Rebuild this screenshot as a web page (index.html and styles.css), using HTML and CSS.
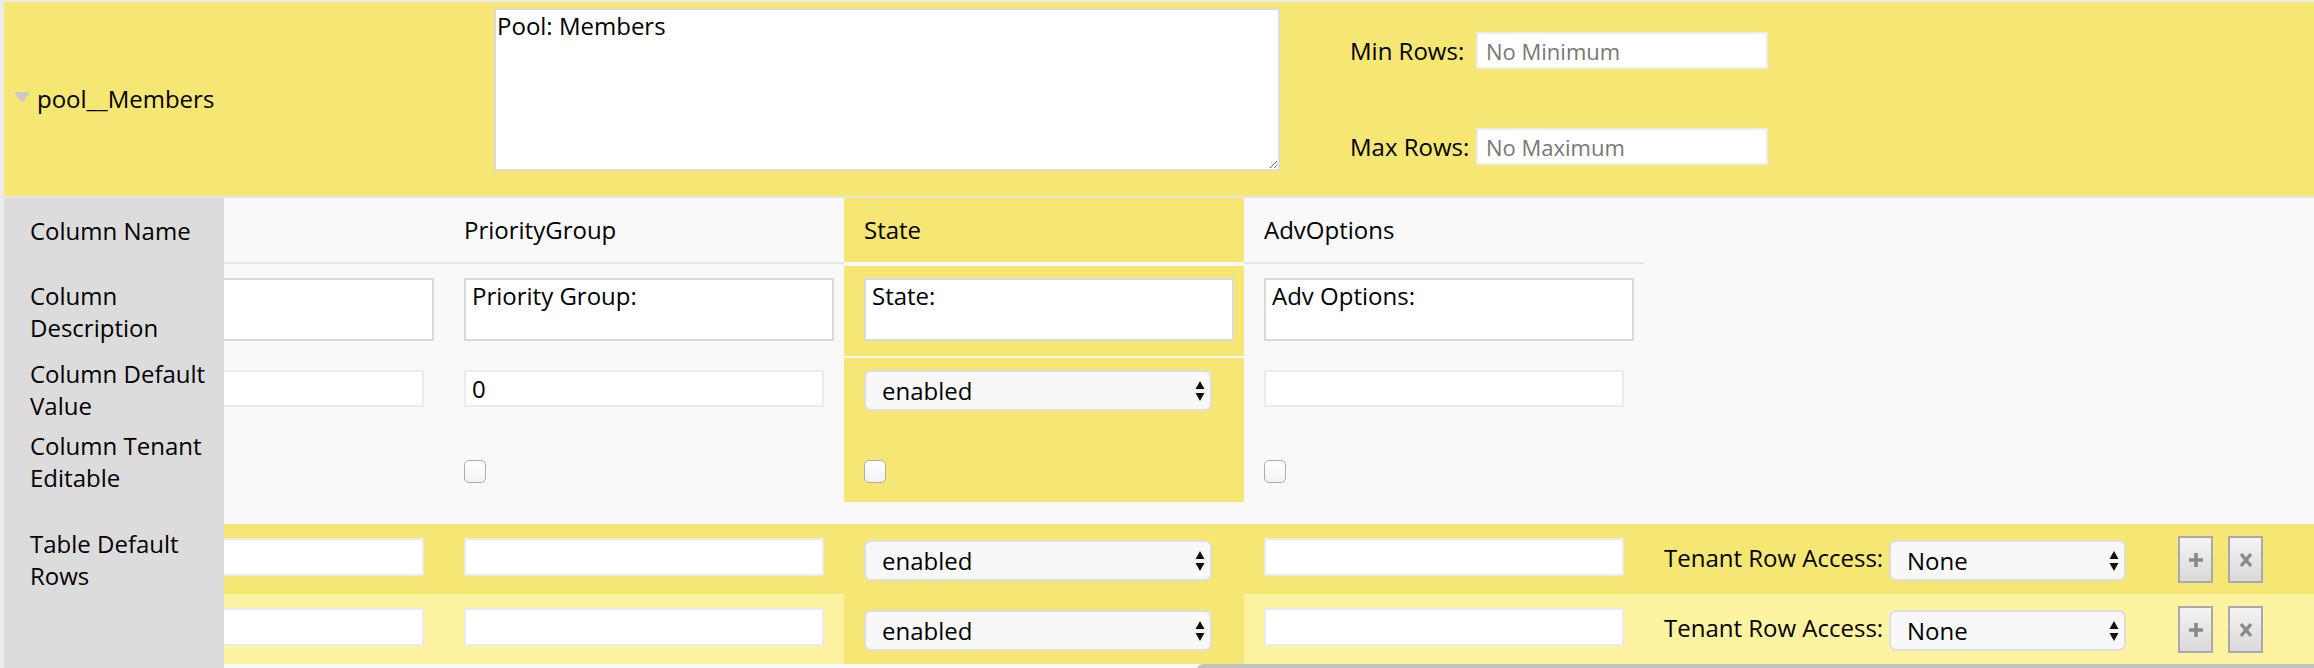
FILE: index.html
```html
<!DOCTYPE html>
<html>
<head>
<meta charset="utf-8">
<link rel="stylesheet" href="styles.css">
</head>
<body>
<div class="page">
  <section class="band">
    <div class="band-title"><span class="tri"></span><span class="name">pool__Members</span></div>
    <textarea class="band-desc">Pool: Members</textarea>
    <div class="limits">
      <label class="limit"><span class="limit-label">Min Rows:</span><input class="limit-input" placeholder="No Minimum"></label>
      <label class="limit"><span class="limit-label">Max Rows:</span><input class="limit-input" placeholder="No Maximum"></label>
    </div>
  </section>

  <section class="table">
    <div class="labels">
      <div class="lab lab-a">Column Name</div>
      <div class="lab lab-b">Column Description</div>
      <div class="lab lab-c">Column Default Value</div>
      <div class="lab lab-d">Column Tenant Editable</div>
      <div class="lab lab-e">Table Default Rows</div>
    </div>

    <div class="data">
      <div class="track">
        <div class="row row-a">
          <div class="cell head"></div>
          <div class="cell head">PriorityGroup</div>
          <div class="cell head hi">State</div>
          <div class="cell head">AdvOptions</div>
        </div>

        <div class="row row-b">
          <div class="cell"><textarea class="desc"></textarea></div>
          <div class="cell"><textarea class="desc">Priority Group:</textarea></div>
          <div class="cell hi"><textarea class="desc">State:</textarea></div>
          <div class="cell"><textarea class="desc">Adv Options:</textarea></div>
        </div>

        <div class="row row-c">
          <div class="cell"><input class="txt" value=""></div>
          <div class="cell"><input class="txt" value="0"></div>
          <div class="cell hi">
            <div class="sel"><select class="select"><option>enabled</option></select><svg class="arrows" width="10" height="20" viewBox="0 0 10 20"><path d="M5 0 L9.5 8 L0.5 8 Z M0.5 12 L9.5 12 L5 20 Z" fill="#111"/></svg></div>
          </div>
          <div class="cell"><input class="txt" value=""></div>
        </div>

        <div class="row row-d">
          <div class="cell"><input type="checkbox" class="chk"></div>
          <div class="cell"><input type="checkbox" class="chk"></div>
          <div class="cell hi"><input type="checkbox" class="chk"></div>
          <div class="cell"><input type="checkbox" class="chk"></div>
        </div>

        <div class="row row-e">
          <div class="cell"><input class="txt tall" value=""></div>
          <div class="cell"><input class="txt tall" value=""></div>
          <div class="cell hi">
            <div class="sel sel-low"><select class="select"><option>enabled</option></select><svg class="arrows" width="10" height="20" viewBox="0 0 10 20"><path d="M5 0 L9.5 8 L0.5 8 Z M0.5 12 L9.5 12 L5 20 Z" fill="#111"/></svg></div>
          </div>
          <div class="cell"><input class="txt tall" value=""></div>
          <div class="cell tenant">
            <span class="tenant-label">Tenant Row Access:</span>
            <div class="sel sel-low"><select class="select narrow"><option>None</option></select><svg class="arrows" width="10" height="20" viewBox="0 0 10 20"><path d="M5 0 L9.5 8 L0.5 8 Z M0.5 12 L9.5 12 L5 20 Z" fill="#111"/></svg></div>
            <button class="btn btn-add" type="button"><svg width="16" height="16" viewBox="0 0 16 16"><path d="M8 1 V15 M1 8 H15" stroke="#8a8a8a" stroke-width="3.6"/></svg></button>
            <button class="btn btn-del" type="button"><svg width="14" height="16" viewBox="0 0 14 16"><path d="M2 2 L12 14 M12 2 L2 14" stroke="#8a8a8a" stroke-width="3.4"/></svg></button>
          </div>
        </div>

        <div class="row row-f">
          <div class="cell"><input class="txt tall" value=""></div>
          <div class="cell"><input class="txt tall" value=""></div>
          <div class="cell hi">
            <div class="sel sel-low"><select class="select"><option>enabled</option></select><svg class="arrows" width="10" height="20" viewBox="0 0 10 20"><path d="M5 0 L9.5 8 L0.5 8 Z M0.5 12 L9.5 12 L5 20 Z" fill="#111"/></svg></div>
          </div>
          <div class="cell"><input class="txt tall" value=""></div>
          <div class="cell tenant">
            <span class="tenant-label">Tenant Row Access:</span>
            <div class="sel sel-low"><select class="select narrow"><option>None</option></select><svg class="arrows" width="10" height="20" viewBox="0 0 10 20"><path d="M5 0 L9.5 8 L0.5 8 Z M0.5 12 L9.5 12 L5 20 Z" fill="#111"/></svg></div>
            <button class="btn btn-add" type="button"><svg width="16" height="16" viewBox="0 0 16 16"><path d="M8 1 V15 M1 8 H15" stroke="#8a8a8a" stroke-width="3.6"/></svg></button>
            <button class="btn btn-del" type="button"><svg width="14" height="16" viewBox="0 0 14 16"><path d="M2 2 L12 14 M12 2 L2 14" stroke="#8a8a8a" stroke-width="3.4"/></svg></button>
          </div>
        </div>
      </div>
      <div class="scrollbar"></div>
    </div>
  </section>
</div>
</body>
</html>
```

FILE: styles.css
```css
html, body {
  margin: 0;
  padding: 0;
  height: 668px;
  overflow: hidden;
  background: #ebebeb;
}

body {
  font-family: "Open Sans", "DejaVu Sans", sans-serif;
  font-size: 24px;
  line-height: 32px;
  color: #000;
}

.page {
  margin: 2px 0 0 4px;
}

/* ---------- top band ---------- */
.band {
  height: 194px;
  background: #f6e674;
  border-bottom: 2px solid #e5e5e5;
  display: flex;
  align-items: flex-start;
}

.band-title {
  width: 490px;
  box-sizing: border-box;
  padding-left: 10px;
  align-self: center;
  display: flex;
  align-items: center;
}

.tri {
  width: 0;
  height: 0;
  border-left: 8px solid transparent;
  border-right: 8px solid transparent;
  border-top: 11px solid #c9c9c9;
  margin-right: 7px;
  margin-bottom: 3px;
}

.name {
  line-height: 32px;
}

.band-desc {
  margin: 6px 0 0 0;
  width: 786px;
  height: 163px;
  box-sizing: border-box;
  border: 2px solid #dcdcdc;
  padding: 0 1px;
  font: inherit;
  line-height: 32px;
  background: #fff;
  outline: none;
}

.limits {
  margin: 30px 0 0 70px;
  display: flex;
  flex-direction: column;
  gap: 59px;
}

.limit {
  display: flex;
  align-items: center;
  height: 37px;
}

.limit-label {
  width: 126px;
}

.limit-input {
  width: 292px;
  height: 37px;
  box-sizing: border-box;
  border: 2px solid #ececec;
  padding: 0 8px;
  font-family: inherit;
  font-size: 22px;
  background: #fff;
  outline: none;
}

.limit-input::placeholder {
  color: #777;
}

/* ---------- table ---------- */
.table {
  display: flex;
  height: 470px;
}

.labels {
  width: 220px;
  flex: none;
  box-sizing: border-box;
  padding: 0 10px 0 26px;
  background: #dcdcdc;
  display: flex;
  flex-direction: column;
}

.lab {
  box-sizing: border-box;
  flex: none;
}

.lab-a { height: 68px; padding-top: 17px; }
.lab-b { height: 92px; padding-top: 14px; }
.lab-c { height: 64px; padding-top: 0; }
.lab-d { height: 102px; padding-top: 8px; }
.lab-e { flex: 1; padding-top: 4px; }

.data {
  flex: 1;
  overflow: hidden;
  position: relative;
  background: #f9f9f9;
}

.track {
  margin-left: -180px;
  width: calc(100% + 180px);
}

.row {
  display: flex;
  box-sizing: border-box;
}

.cell {
  width: 400px;
  flex: none;
  box-sizing: border-box;
  padding-left: 20px;
}

.hi {
  background: #f6e674;
}

.row-a { height: 66px; }
.row-a .cell {
  height: 66px;
  padding-top: 16px;
  border-bottom: 2px solid #e4e4e4;
}
.row-a .cell.hi {
  border-bottom-color: #f9f9f9;
  background-clip: padding-box;
}

.row-b { height: 90px; margin-top: 2px; }
.row-b .cell { padding-top: 12px; }

.row-c { height: 64px; margin-top: 2px; }
.row-c .cell { padding-top: 12px; }

.row-d { height: 80px; }
.row-d .cell { padding-top: 38px; }

.row-e { height: 70px; margin-top: 22px; background: #f6e674; }
.row-f { height: 70px; background: #fdf3a1; }
.row-e .cell, .row-f .cell { padding-top: 14px; }

.tenant {
  flex: 1;
  display: flex;
  align-items: flex-start;
}

.desc {
  display: block;
  margin: 0;
  width: 370px;
  height: 63px;
  box-sizing: border-box;
  border: 2px solid #dadada;
  padding: 0 6px;
  font: inherit;
  line-height: 32px;
  background: #fff;
  resize: none;
  outline: none;
}

.txt {
  display: block;
  margin: 0;
  width: 360px;
  height: 37px;
  box-sizing: border-box;
  border: 2px solid #ebebeb;
  padding: 0 6px;
  font: inherit;
  background: #fff;
  outline: none;
}

.txt.tall {
  height: 38px;
}

.sel {
  position: relative;
  display: inline-block;
  vertical-align: top;
}

.sel-low {
  margin-top: 2px;
}

.select {
  display: block;
  appearance: none;
  -webkit-appearance: none;
  margin: 0;
  width: 348px;
  height: 41px;
  box-sizing: border-box;
  border: 2px solid #dedede;
  border-radius: 7px;
  background: #f8f8f8;
  padding: 0 0 0 16px;
  font: inherit;
  color: #000;
  outline: none;
}

.select.narrow {
  width: 237px;
}

.arrows {
  position: absolute;
  right: 7px;
  top: 11px;
  pointer-events: none;
}

.chk {
  appearance: none;
  -webkit-appearance: none;
  display: block;
  margin: 0;
  width: 22px;
  height: 23px;
  box-sizing: border-box;
  border: 1px solid #adadad;
  border-radius: 5px;
  background: linear-gradient(#ffffff, #f2f2f2);
}

.tenant-label {
  width: 225px;
  flex: none;
  margin-top: 4px;
}

.btn {
  width: 35px;
  height: 47px;
  margin: -2px 0 0 0;
  padding: 0;
  box-sizing: border-box;
  border: 2px solid #a9a9a9;
  background: linear-gradient(#f4f4f4, #d9d9d9);
  display: flex;
  align-items: center;
  justify-content: center;
  flex: none;
}

.btn-add {
  margin-left: 52px;
}

.btn-del {
  margin-left: 15px;
}

.scrollbar {
  position: absolute;
  left: 973px;
  right: 0;
  top: 466px;
  height: 12px;
  border-radius: 6px 0 0 6px;
  background: #c1c1c1;
}
```
